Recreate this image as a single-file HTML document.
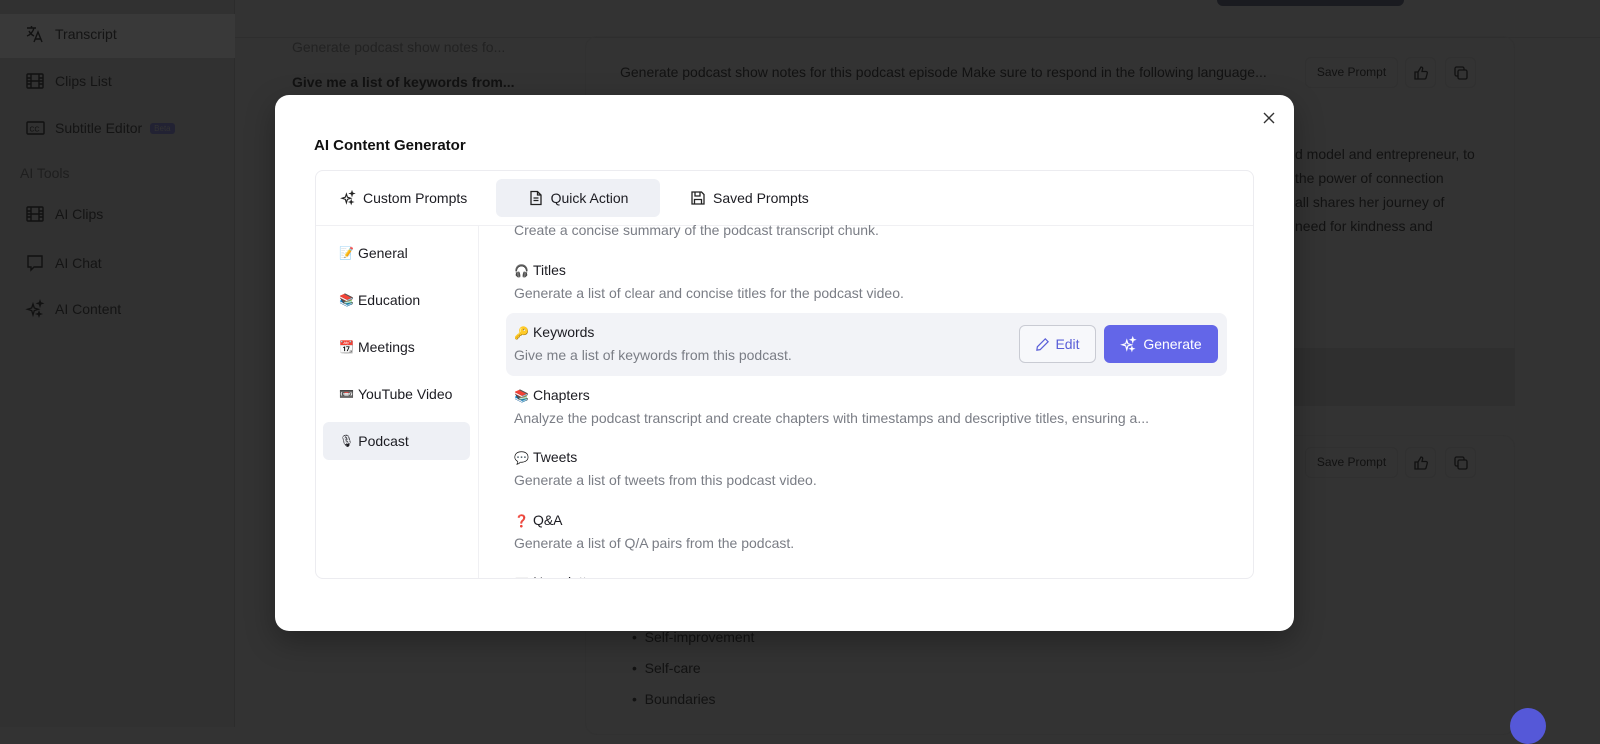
<!DOCTYPE html>
<html><head><meta charset="utf-8"><style>
*{box-sizing:border-box;margin:0;padding:0}
body{width:1600px;height:727px;overflow:hidden;background:#333;font-family:"Liberation Sans","Noto Sans CJK SC",sans-serif;position:relative;color:#111}
.abs{position:absolute}
.sb{left:0;top:0;width:235px;height:727px;background:#313131;border-right:1px solid #2c2c2c}
.navi{position:absolute;left:0;width:235px;height:46px;display:flex;align-items:center;padding-left:25px;font-size:14px;color:#141414}
.navi svg{margin-right:10px}
.dk{color:#121212;font-size:14px;white-space:nowrap}
.modal{left:275px;top:95px;width:1019px;height:536px;background:#fff;border-radius:14px;box-shadow:0 10px 30px rgba(0,0,0,.3)}
.box{left:40px;top:75px;width:939px;height:409px;border:1px solid #ececf0;border-radius:8px;overflow:hidden}
.tab{position:absolute;top:8px;height:38px;display:flex;align-items:center;font-size:14px;color:#1c1c22;border-radius:6px}
.tab svg{margin-right:7px}
.cat{position:absolute;left:7px;width:147px;height:38px;display:flex;align-items:center;padding-left:16px;font-size:14px;color:#1c1c22;border-radius:6px}
.it{position:absolute;left:190px;width:721px;padding-left:8px}
.it .t{font-size:14px;color:#1c1c22;height:20px;line-height:20px}
.it .d{font-size:14px;color:#7a7d85;margin-top:4px;line-height:18px;white-space:nowrap}
.emo{font-size:12px;margin-right:4px}
.ib{width:31px;height:31px;border:1px solid #303030;border-radius:6px;display:flex;align-items:center;justify-content:center}
</style></head><body>
<div class="abs sb"></div>
<div class="abs" style="left:0;top:14px;width:235px;height:44px;background:#393939"></div>
<div class="abs" style="left:235px;top:37px;width:1365px;height:1px;background:#2e2e2e"></div>
<div class="abs" style="left:1217px;top:0;width:187px;height:6px;background:#1a1b20;border-radius:0 0 6px 6px"></div>
<div class="navi" style="top:11px"><svg width="20" height="20" viewBox="0 0 20 20" fill="none" stroke="#111" stroke-width="1.4"><path d="M2 4h9M6.5 2v2M9 4c-1 4-4 7-7 8M4 7c1 2 3 4 5 5M9 18l4-10 4 10M10.5 15h5"/></svg>Transcript</div>
<div class="navi" style="top:58px"><svg width="20" height="20" viewBox="0 0 20 20" fill="none" stroke="#111" stroke-width="1.4"><rect x="2" y="3" width="16" height="14" rx="1"/><path d="M6 3v14M14 3v14M2 7h4M2 10h16M2 13h4M14 7h4M14 13h4"/></svg>Clips List</div>
<div class="navi" style="top:105px"><svg width="20" height="20" viewBox="0 0 20 20" fill="none" stroke="#111" stroke-width="1.4"><rect x="2" y="4" width="17" height="12" rx="1"/><text x="4.5" y="13.5" font-size="7" fill="#111" stroke="none" font-family="Liberation Sans">CC</text></svg>Subtitle Editor<span style="margin-left:8px;background:#223;font-size:8px;padding:1px 4px;border-radius:3px;color:#333">Beta</span></div>
<div class="abs dk" style="left:20px;top:165px;color:#1e1e1e">AI Tools</div>
<div class="navi" style="top:191px"><svg width="20" height="20" viewBox="0 0 20 20" fill="none" stroke="#111" stroke-width="1.4"><rect x="2" y="3" width="16" height="14" rx="1"/><path d="M6 3v14M14 3v14M2 7h4M2 10h16M2 13h4M14 7h4M14 13h4"/></svg>AI Clips</div>
<div class="navi" style="top:240px"><svg width="20" height="20" viewBox="0 0 20 20" fill="none" stroke="#111" stroke-width="1.4"><path d="M3 3h14v11H9l-3 3v-3H3z"/></svg>AI Chat</div>
<div class="navi" style="top:286px"><svg width="20" height="20" viewBox="0 0 20 20" fill="none" stroke="#111" stroke-width="1.3"><path d="M8 5l1.3 4 4 1.3-4 1.3L8 16l-1.3-4.4L2.5 10.3l4.2-1.3zM15 2l.6 1.8 1.8.6-1.8.6L15 7l-.6-2-1.8-.6 1.8-.6zM14 13l.5 1.5 1.5.5-1.5.5L14 17l-.5-1.5L12 15l1.5-.5z"/></svg>AI Content</div>
<div class="abs dk" style="left:292px;top:39px;color:#222">Generate podcast show notes fo...</div>
<div class="abs dk" style="left:292px;top:74px;font-weight:bold">Give me a list of keywords from...</div>
<div class="abs" style="left:585px;top:36px;width:930px;height:370px;border:1px solid #313131;border-radius:12px"></div>
<div class="abs dk" style="left:620px;top:64px">Generate podcast show notes for this podcast episode Make sure to respond in the following language...</div>
<div class="abs" style="left:1305px;top:57px;width:93px;height:31px;border:1px solid #303030;border-radius:6px;font-size:12px;color:#111;text-align:center;line-height:29px">Save Prompt</div>
<div class="abs ib" style="left:1405px;top:57px"><svg width="16" height="16" viewBox="0 0 16 16" fill="none" stroke="#111" stroke-width="1.3"><path d="M2 7h3v7H2zM5 7l3-5c1.5 0 2 1 1.5 2.5L9 6.5h4c1 0 1.5.8 1.3 1.6l-1.2 4.6c-.2.8-.8 1.3-1.6 1.3H5"/></svg></div>
<div class="abs ib" style="left:1445px;top:57px"><svg width="16" height="16" viewBox="0 0 16 16" fill="none" stroke="#111" stroke-width="1.3"><rect x="5" y="5" width="9" height="9" rx="1.5"/><path d="M11 5V3.5C11 2.7 10.3 2 9.5 2h-6C2.7 2 2 2.7 2 3.5v6c0 .8.7 1.5 1.5 1.5H5"/></svg></div>
<div class="abs dk" style="left:1295px;top:142px;line-height:24px;font-size:14px">d model and entrepreneur, to<br>the power of connection<br>all shares her journey of<br>need for kindness and</div>
<div class="abs" style="left:585px;top:348px;width:930px;height:58px;background:#2f2f2f"></div>
<div class="abs" style="left:585px;top:435px;width:930px;height:300px;border:1px solid #313131;border-radius:12px"></div>
<div class="abs" style="left:1305px;top:447px;width:93px;height:31px;border:1px solid #303030;border-radius:6px;font-size:12px;color:#111;text-align:center;line-height:29px">Save Prompt</div>
<div class="abs ib" style="left:1405px;top:447px"><svg width="16" height="16" viewBox="0 0 16 16" fill="none" stroke="#111" stroke-width="1.3"><path d="M2 7h3v7H2zM5 7l3-5c1.5 0 2 1 1.5 2.5L9 6.5h4c1 0 1.5.8 1.3 1.6l-1.2 4.6c-.2.8-.8 1.3-1.6 1.3H5"/></svg></div>
<div class="abs ib" style="left:1445px;top:447px"><svg width="16" height="16" viewBox="0 0 16 16" fill="none" stroke="#111" stroke-width="1.3"><rect x="5" y="5" width="9" height="9" rx="1.5"/><path d="M11 5V3.5C11 2.7 10.3 2 9.5 2h-6C2.7 2 2 2.7 2 3.5v6c0 .8.7 1.5 1.5 1.5H5"/></svg></div>
<div class="abs dk" style="left:632px;top:622px;line-height:31px">•&nbsp;&nbsp;Self-improvement<br>•&nbsp;&nbsp;Self-care<br>•&nbsp;&nbsp;Boundaries</div>
<div class="abs" style="left:1510px;top:708px;width:36px;height:36px;border-radius:50%;background:#5558d8"></div>

<div class="abs modal">
<svg class="abs" style="left:988px;top:17px" width="12" height="12" viewBox="0 0 12 12" stroke="#333" stroke-width="1.4"><path d="M1 1l10 10M11 1L1 11"/></svg>
<div class="abs" style="left:39px;top:42px;font-size:15px;font-weight:bold;color:#111">AI Content Generator</div>
<div class="abs box">
 <div class="abs" style="left:0;top:54px;width:939px;height:1px;background:#f0f0f3"></div>
 <div class="abs" style="left:162px;top:55px;width:1px;height:360px;background:#f0f0f3"></div>
 <div class="tab" style="left:24px"><svg width="16" height="16" viewBox="0 0 20 20" fill="none" stroke="#222" stroke-width="1.4"><path d="M8 5l1.3 4 4 1.3-4 1.3L8 16l-1.3-4.4L2.5 10.3l4.2-1.3zM15 2l.6 1.8 1.8.6-1.8.6L15 7l-.6-2-1.8-.6 1.8-.6zM14 13l.5 1.5 1.5.5-1.5.5L14 17l-.5-1.5L12 15l1.5-.5z"/></svg>Custom Prompts</div>
 <div class="tab" style="left:180px;width:164px;background:#eef0f5;justify-content:center"><svg width="16" height="16" viewBox="0 0 16 16" fill="none" stroke="#222" stroke-width="1.3"><path d="M3 1.5h6.5l3.5 3.5v9.5H3z M9.5 1.5V5H13 M5.5 8h5M5.5 10.5h5"/></svg>Quick Action</div>
 <div class="tab" style="left:374px"><svg width="16" height="16" viewBox="0 0 16 16" fill="none" stroke="#222" stroke-width="1.3"><path d="M2 2h9.5L14 4.5V14H2z M5 2v4h5V2 M4.5 14V9.5h7V14"/></svg>Saved Prompts</div>
 <div class="cat" style="top:63px"><span class="emo">📝</span>General</div>
 <div class="cat" style="top:110px"><span class="emo">📚</span>Education</div>
 <div class="cat" style="top:157px"><span class="emo">📆</span>Meetings</div>
 <div class="cat" style="top:204px"><span class="emo">📼</span>YouTube Video</div>
 <div class="cat" style="top:251px;background:#eef0f5"><span class="emo">🎙</span>Podcast</div>
 <div class="it" style="top:50px"><div class="d" style="margin-top:0">Create a concise summary of the podcast transcript chunk.</div></div>
 <div class="it" style="top:89px"><div class="t"><span class="emo">🎧</span>Titles</div><div class="d">Generate a list of clear and concise titles for the podcast video.</div></div>
 <div class="abs" style="left:190px;top:142px;width:721px;height:63px;background:#f2f3f7;border-radius:8px"></div>
 <div class="it" style="top:151px"><div class="t"><span class="emo">🔑</span>Keywords</div><div class="d">Give me a list of keywords from this podcast.</div></div>
 <div class="abs" style="left:703px;top:154px;width:77px;height:38px;border:1px solid #c9cbd3;border-radius:6px;background:#f7f8fb;display:flex;align-items:center;justify-content:center;font-size:14px;color:#5a5fd8"><svg width="15" height="15" viewBox="0 0 16 16" fill="none" stroke="#5a5fd8" stroke-width="1.3" style="margin-right:5px"><path d="M11 2l3 3-8.5 8.5L2 14l.5-3.5z"/></svg>Edit</div>
 <div class="abs" style="left:788px;top:154px;width:114px;height:38px;border-radius:6px;background:#6366e8;display:flex;align-items:center;justify-content:center;font-size:14px;color:#fff"><svg width="17" height="17" viewBox="0 0 20 20" fill="none" stroke="#fff" stroke-width="1.4" style="margin-right:6px"><path d="M8 5l1.3 4 4 1.3-4 1.3L8 16l-1.3-4.4L2.5 10.3l4.2-1.3zM15 2l.6 1.8 1.8.6-1.8.6L15 7l-.6-2-1.8-.6 1.8-.6zM14 13l.5 1.5 1.5.5-1.5.5L14 17l-.5-1.5L12 15l1.5-.5z"/></svg>Generate</div>
 <div class="it" style="top:214px"><div class="t"><span class="emo">📚</span>Chapters</div><div class="d">Analyze the podcast transcript and create chapters with timestamps and descriptive titles, ensuring a...</div></div>
 <div class="it" style="top:276px"><div class="t"><span class="emo">💬</span>Tweets</div><div class="d">Generate a list of tweets from this podcast video.</div></div>
 <div class="it" style="top:339px"><div class="t"><span class="emo" style="color:#d22">❓</span>Q&amp;A</div><div class="d">Generate a list of Q/A pairs from the podcast.</div></div>
 <div class="it" style="top:401px"><div class="t"><span class="emo">📰</span>Newsletter</div></div>
</div>
</div>
</body></html>
